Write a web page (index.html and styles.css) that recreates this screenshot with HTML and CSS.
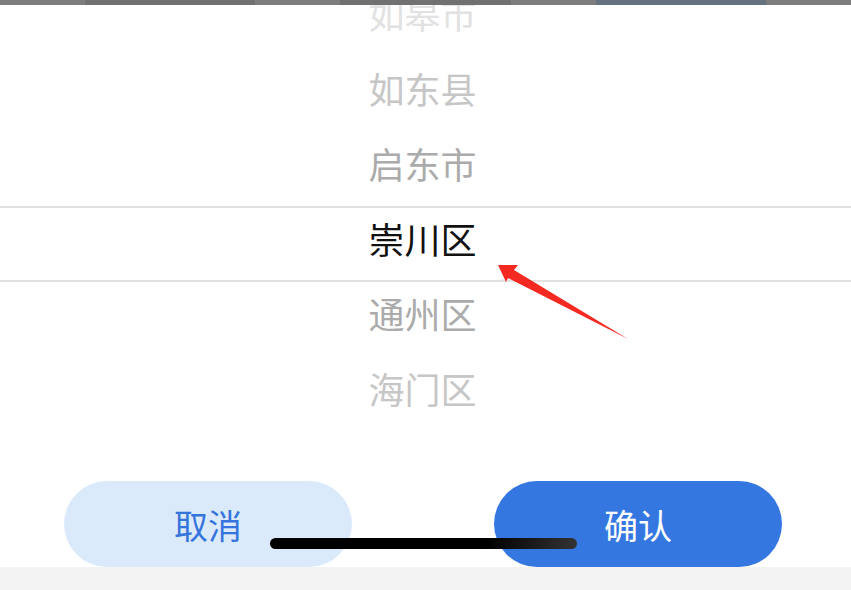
FILE: index.html
```html
<!DOCTYPE html>
<html>

<head>
  <title>选择地区</title>
  <link rel="stylesheet" href="styles.css">
</head>

<body>
  <div class="screen">
    <div class="topBar">
      <span class="seg"></span>
      <span class="seg dark"></span>
      <span class="seg"></span>
      <span class="seg dark"></span>
      <span class="seg"></span>
      <span class="seg blue"></span>
      <span class="seg"></span>
    </div>

    <div class="picker">
      <div class="pickerList">
        <div class="pickerItem far2">如皋市</div>
        <div class="pickerItem far1">如东县</div>
        <div class="pickerItem near">启东市</div>
        <div class="pickerItem selected">崇川区</div>
        <div class="pickerItem near">通州区</div>
        <div class="pickerItem far1">海门区</div>
      </div>
      <div class="selectBand"></div>
      <svg class="arrow" width="140" height="90" viewBox="0 0 140 90">
        <polygon points="0,10 20,10 16,15 130,84 10,23 8,27" fill="#f42a22" />
      </svg>
    </div>

    <div class="actions">
      <button class="btn cancel">取消</button>
      <button class="btn confirm">确认</button>
    </div>
    <div class="bottomArea"></div>

    <div class="homeBar"></div>
  </div>
</body>

</html>
```

FILE: styles.css
```css
body {
  margin: 0;
  background: #fff;
  font-family: "Noto Sans CJK SC", "Noto Sans", sans-serif;
}

.screen {
  width: 851px;
  height: 590px;
  position: relative;
  overflow: hidden;
}

.topBar {
  height: 5px;
  display: flex;
  background: #7d7d7d;
}

.seg {
  flex: 1;
  background: #7d7d7d;
}

.seg.dark {
  flex: 2;
  background: #717171;
}

.seg.blue {
  flex: 2;
  background: #677280;
}

.picker {
  height: 476px;
  position: relative;
  overflow: hidden;
}

.pickerList {
  margin-top: -29px;
  padding-right: 6px;
}

.pickerItem {
  height: 75px;
  line-height: 75px;
  text-align: center;
  font-size: 36px;
  color: #a8a8a8;
}

.pickerItem.selected {
  color: #111;
}

.pickerItem.near {
  color: #ababab;
}

.pickerItem.far1 {
  color: #c6c6c6;
}

.pickerItem.far2 {
  color: #e2e2e2;
}

.selectBand {
  position: absolute;
  left: 0;
  right: 0;
  top: 201px;
  height: 72px;
  border-top: 2px solid #e2e2e2;
  border-bottom: 2px solid #e2e2e2;
}

.arrow {
  position: absolute;
  left: 498px;
  top: 250px;
  overflow: visible;
}

.actions {
  display: flex;
  justify-content: space-between;
  padding: 0 69px 0 64px;
}

.btn {
  width: 288px;
  height: 86px;
  border: none;
  border-radius: 43px;
  font-family: inherit;
  font-size: 34px;
  padding: 0;
}

.cancel {
  background: #dbeafb;
  color: #3474dc;
}

.confirm {
  background: #3577e0;
  color: #fff;
}

.bottomArea {
  height: 24px;
  background: #f3f3f3;
}

.homeBar {
  position: absolute;
  left: 270px;
  top: 538px;
  width: 307px;
  height: 11px;
  border-radius: 6px;
  background: linear-gradient(to right, #000 0%, #000 70%, #333 100%);
}
```
